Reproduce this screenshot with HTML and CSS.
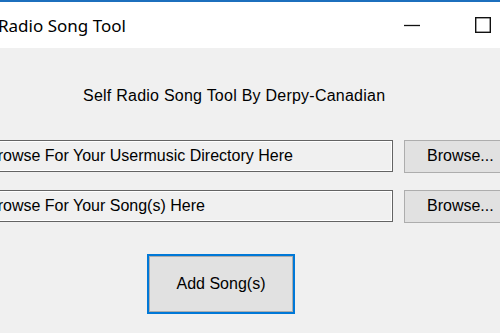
FILE: index.html
```html
<!DOCTYPE html>
<html>
<head>
<meta charset="utf-8">
<link rel="stylesheet" href="styles.css">
</head>
<body>
<div class="window">
  <div class="titlebar">
    <span class="title">Radio Song Tool</span>
    <div class="controls">
      <span class="ctl"><svg width="16" height="16" viewBox="0 0 16 16"><line x1="0" y1="8.5" x2="16" y2="8.5" stroke="#111" stroke-width="1.3"/></svg></span>
      <span class="ctl"><svg width="16" height="16" viewBox="0 0 16 16"><rect x="0.7" y="0.7" width="14.6" height="14.6" fill="none" stroke="#111" stroke-width="1.4"/></svg></span>
    </div>
  </div>
  <div class="content">
    <div class="heading">Self Radio Song Tool By Derpy-Canadian</div>
    <div class="row">
      <div class="textbox">Browse For Your Usermusic Directory Here</div>
      <div class="btn">Browse...</div>
    </div>
    <div class="row">
      <div class="textbox">Browse For Your Song(s) Here</div>
      <div class="btn">Browse...</div>
    </div>
    <div class="add-wrap">
      <div class="add">Add Song(s)</div>
    </div>
  </div>
</div>
</body>
</html>
```
FILE: styles.css
```css
html, body {
  margin: 0;
  padding: 0;
  width: 500px;
  height: 333px;
  overflow: hidden;
  background: #f0f0f0;
}
.window {
  border-top: 2px solid #1c6fbd;
  font-family: "Liberation Sans", Arial, sans-serif;
  color: #000;
}
.titlebar {
  height: 46px;
  background: #fff;
  display: flex;
  align-items: center;
  justify-content: space-between;
}
.title {
  font-family: "Noto Sans", "Open Sans", sans-serif;
  font-size: 17px;
  margin-left: -2px;
  color: #000;
}
.controls {
  display: flex;
  gap: 55px;
  margin-right: 9px;
  align-items: center;
}
.ctl {
  display: flex;
  width: 16px;
  height: 16px;
}
.content {
  margin-left: -30px;
  font-size: 16px;
}
.heading {
  margin-left: 113px;
  padding-top: 39px;
  height: 53px;
  box-sizing: border-box;
  line-height: 18px;
  letter-spacing: 0.24px;
}
.row {
  display: flex;
  align-items: center;
  gap: 11px;
  margin-top: 39px;
  height: 32px;
}
.row + .row {
  margin-top: 18px;
}
.textbox {
  flex-shrink: 0;
  width: 423px;
  height: 32px;
  box-sizing: border-box;
  border: 1px solid #646464;
  box-shadow: inset 0 0 0 1px #fff;
  background: #f0f0f0;
  padding-left: 16px;
  display: flex;
  align-items: center;
}
.btn {
  flex-shrink: 0;
  width: 110px;
  height: 33px;
  box-sizing: border-box;
  border: 1px solid #adadad;
  background: #e1e1e1;
  padding-left: 22px;
  display: flex;
  align-items: center;
}
.add-wrap {
  margin-top: 32px;
  margin-left: 177px;
}
.add {
  width: 148px;
  height: 60px;
  box-sizing: border-box;
  border: 2px solid #0078d7;
  box-shadow: inset 0 0 0 1px #adadad;
  background: #e1e1e1;
  display: flex;
  align-items: center;
  justify-content: center;
}
```
